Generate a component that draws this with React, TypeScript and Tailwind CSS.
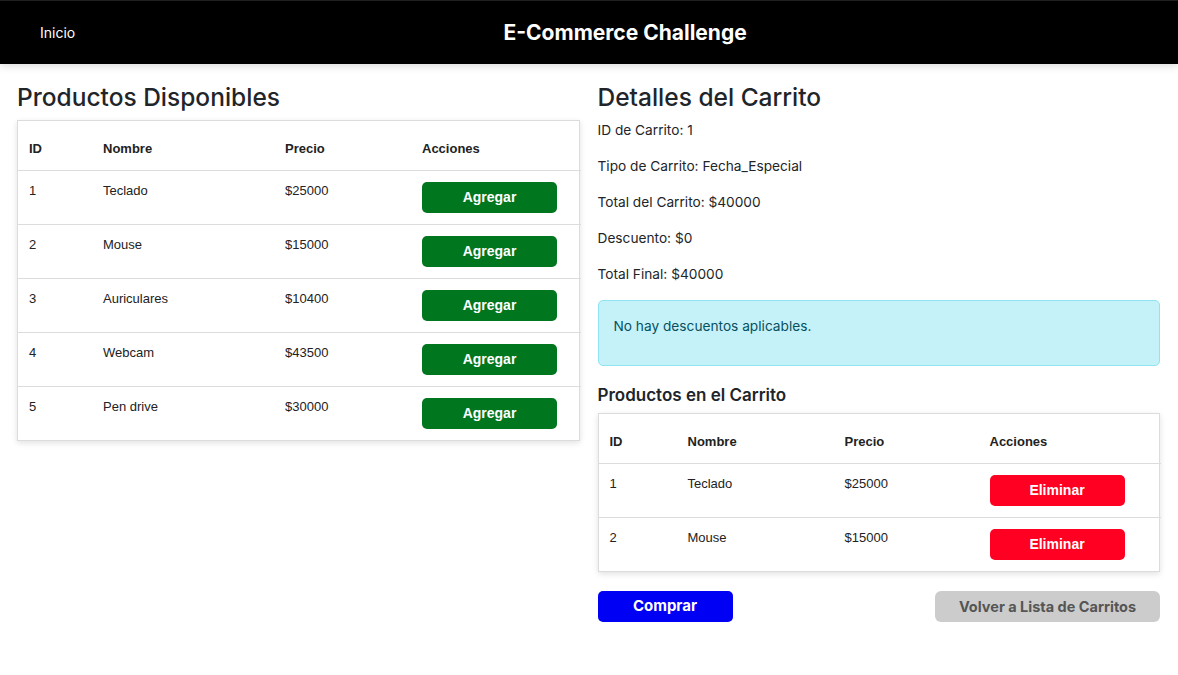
import React from "react";

type Product = { id: number; name: string; price: number };

const products: Product[] = [
  { id: 1, name: "Teclado", price: 25000 },
  { id: 2, name: "Mouse", price: 15000 },
  { id: 3, name: "Auriculares", price: 10400 },
  { id: 4, name: "Webcam", price: 43500 },
  { id: 5, name: "Pen drive", price: 30000 },
];

const cartItems: Product[] = [products[0], products[1]];

const sans = "font-['Inter',sans-serif]";
const arial = "font-['Liberation_Sans',Arial,sans-serif]";

interface ProductTableProps {
  rows: Product[];
  widths: string[];
  action: "add" | "remove";
}

const ProductTable = ({ rows, widths, action }: ProductTableProps) => {
  return (
    <div className="border border-[#dcdcdc] bg-white shadow-[0_2px_6px_rgba(0,0,0,0.12)]">
      <table className={`w-full table-fixed border-collapse text-[13px] text-[#222] ${arial}`}>
        <colgroup>
          {widths.map((w, i) => (
            <col key={i} className={w} />
          ))}
        </colgroup>
        <thead>
          <tr className="border-b border-[#dcdcdc]">
            {["ID", "Nombre", "Precio", "Acciones"].map((h) => (
              <th key={h} className="pl-[11px] pt-[20px] pb-[14px] text-left font-bold leading-[15px]">
                {h}
              </th>
            ))}
          </tr>
        </thead>
        <tbody>
          {rows.map((p, i) => (
            <tr key={p.id} className={i < rows.length - 1 ? "border-b border-[#dcdcdc]" : ""}>
              <td className="pl-[11px] pt-[12px] pb-[11px] align-top leading-[15px]">{p.id}</td>
              <td className="pl-[11px] pt-[12px] pb-[11px] align-top leading-[15px]">{p.name}</td>
              <td className="pl-[11px] pt-[12px] pb-[11px] align-top leading-[15px]">${p.price}</td>
              <td className="pl-[11px] pt-[11px] pb-[11px] align-top">
                {action === "add" ? (
                  <button className="block h-[31px] w-[135px] rounded-[5px] bg-[#00761e] text-[14px] font-bold text-white">
                    Agregar
                  </button>
                ) : (
                  <button className="block h-[31px] w-[135px] rounded-[5px] bg-[#ff0022] text-[14px] font-bold text-white">
                    Eliminar
                  </button>
                )}
              </td>
            </tr>
          ))}
        </tbody>
      </table>
    </div>
  );
};

const App = () => {
  return (
    <div className={`min-h-[675px] bg-white text-[#212529] ${sans}`}>
      <header className="flex h-[64px] items-center border-t border-[#1f1f1f] bg-black pl-[40px] pr-[3px] shadow-[0_2px_8px_rgba(0,0,0,0.15)]">
        <a className="text-[14px] text-white">Inicio</a>
        <h1 className="flex-1 text-center text-[21px] font-bold text-white">E-Commerce Challenge</h1>
      </header>

      <main className="grid grid-cols-2 gap-[18px] px-[17px] pr-[18px] pt-[18px]">
        <section>
          <h2 className="mb-[8px] text-[24.5px] font-medium leading-[30px]">Productos Disponibles</h2>
          <ProductTable
            rows={products}
            widths={["w-[74px]", "w-[182px]", "w-[137px]", "w-[170px]"]}
            action="add"
          />
        </section>

        <section className="text-[13.7px]">
          <h2 className="mb-[8px] text-[24.5px] font-medium leading-[30px]">Detalles del Carrito</h2>
          <p className="mb-[16px] leading-[20px]">ID de Carrito: 1</p>
          <p className="mb-[16px] leading-[20px]">Tipo de Carrito: Fecha_Especial</p>
          <p className="mb-[16px] leading-[20px]">Total del Carrito: $40000</p>
          <p className="mb-[16px] leading-[20px]">Descuento: $0</p>
          <p className="mb-[16px] leading-[20px]">Total Final: $40000</p>

          <div className="mb-[18px] rounded-[5px] border border-[#8fe3f2] bg-[#c5f2f8] px-[15px] pt-[15px] pb-[29px] text-[#06505f]">
            <p className="leading-[20px]">No hay descuentos aplicables.</p>
          </div>

          <h3 className="mb-[7px] text-[17px] font-semibold leading-[22px]">Productos en el Carrito</h3>
          <ProductTable
            rows={cartItems}
            widths={["w-[78px]", "w-[157px]", "w-[145px]", "w-[182px]"]}
            action="remove"
          />

          <div className="mt-[19px] flex items-center justify-between">
            <button className="h-[31px] w-[135px] rounded-[5px] bg-[#0000f5] text-[15px] font-bold text-white">
              Comprar
            </button>
            <button className="h-[31px] w-[225px] rounded-[6px] bg-[#cccccc] text-[14.5px] font-bold text-[#555]">
              Volver a Lista de Carritos
            </button>
          </div>
        </section>
      </main>
    </div>
  );
};

export default App;
